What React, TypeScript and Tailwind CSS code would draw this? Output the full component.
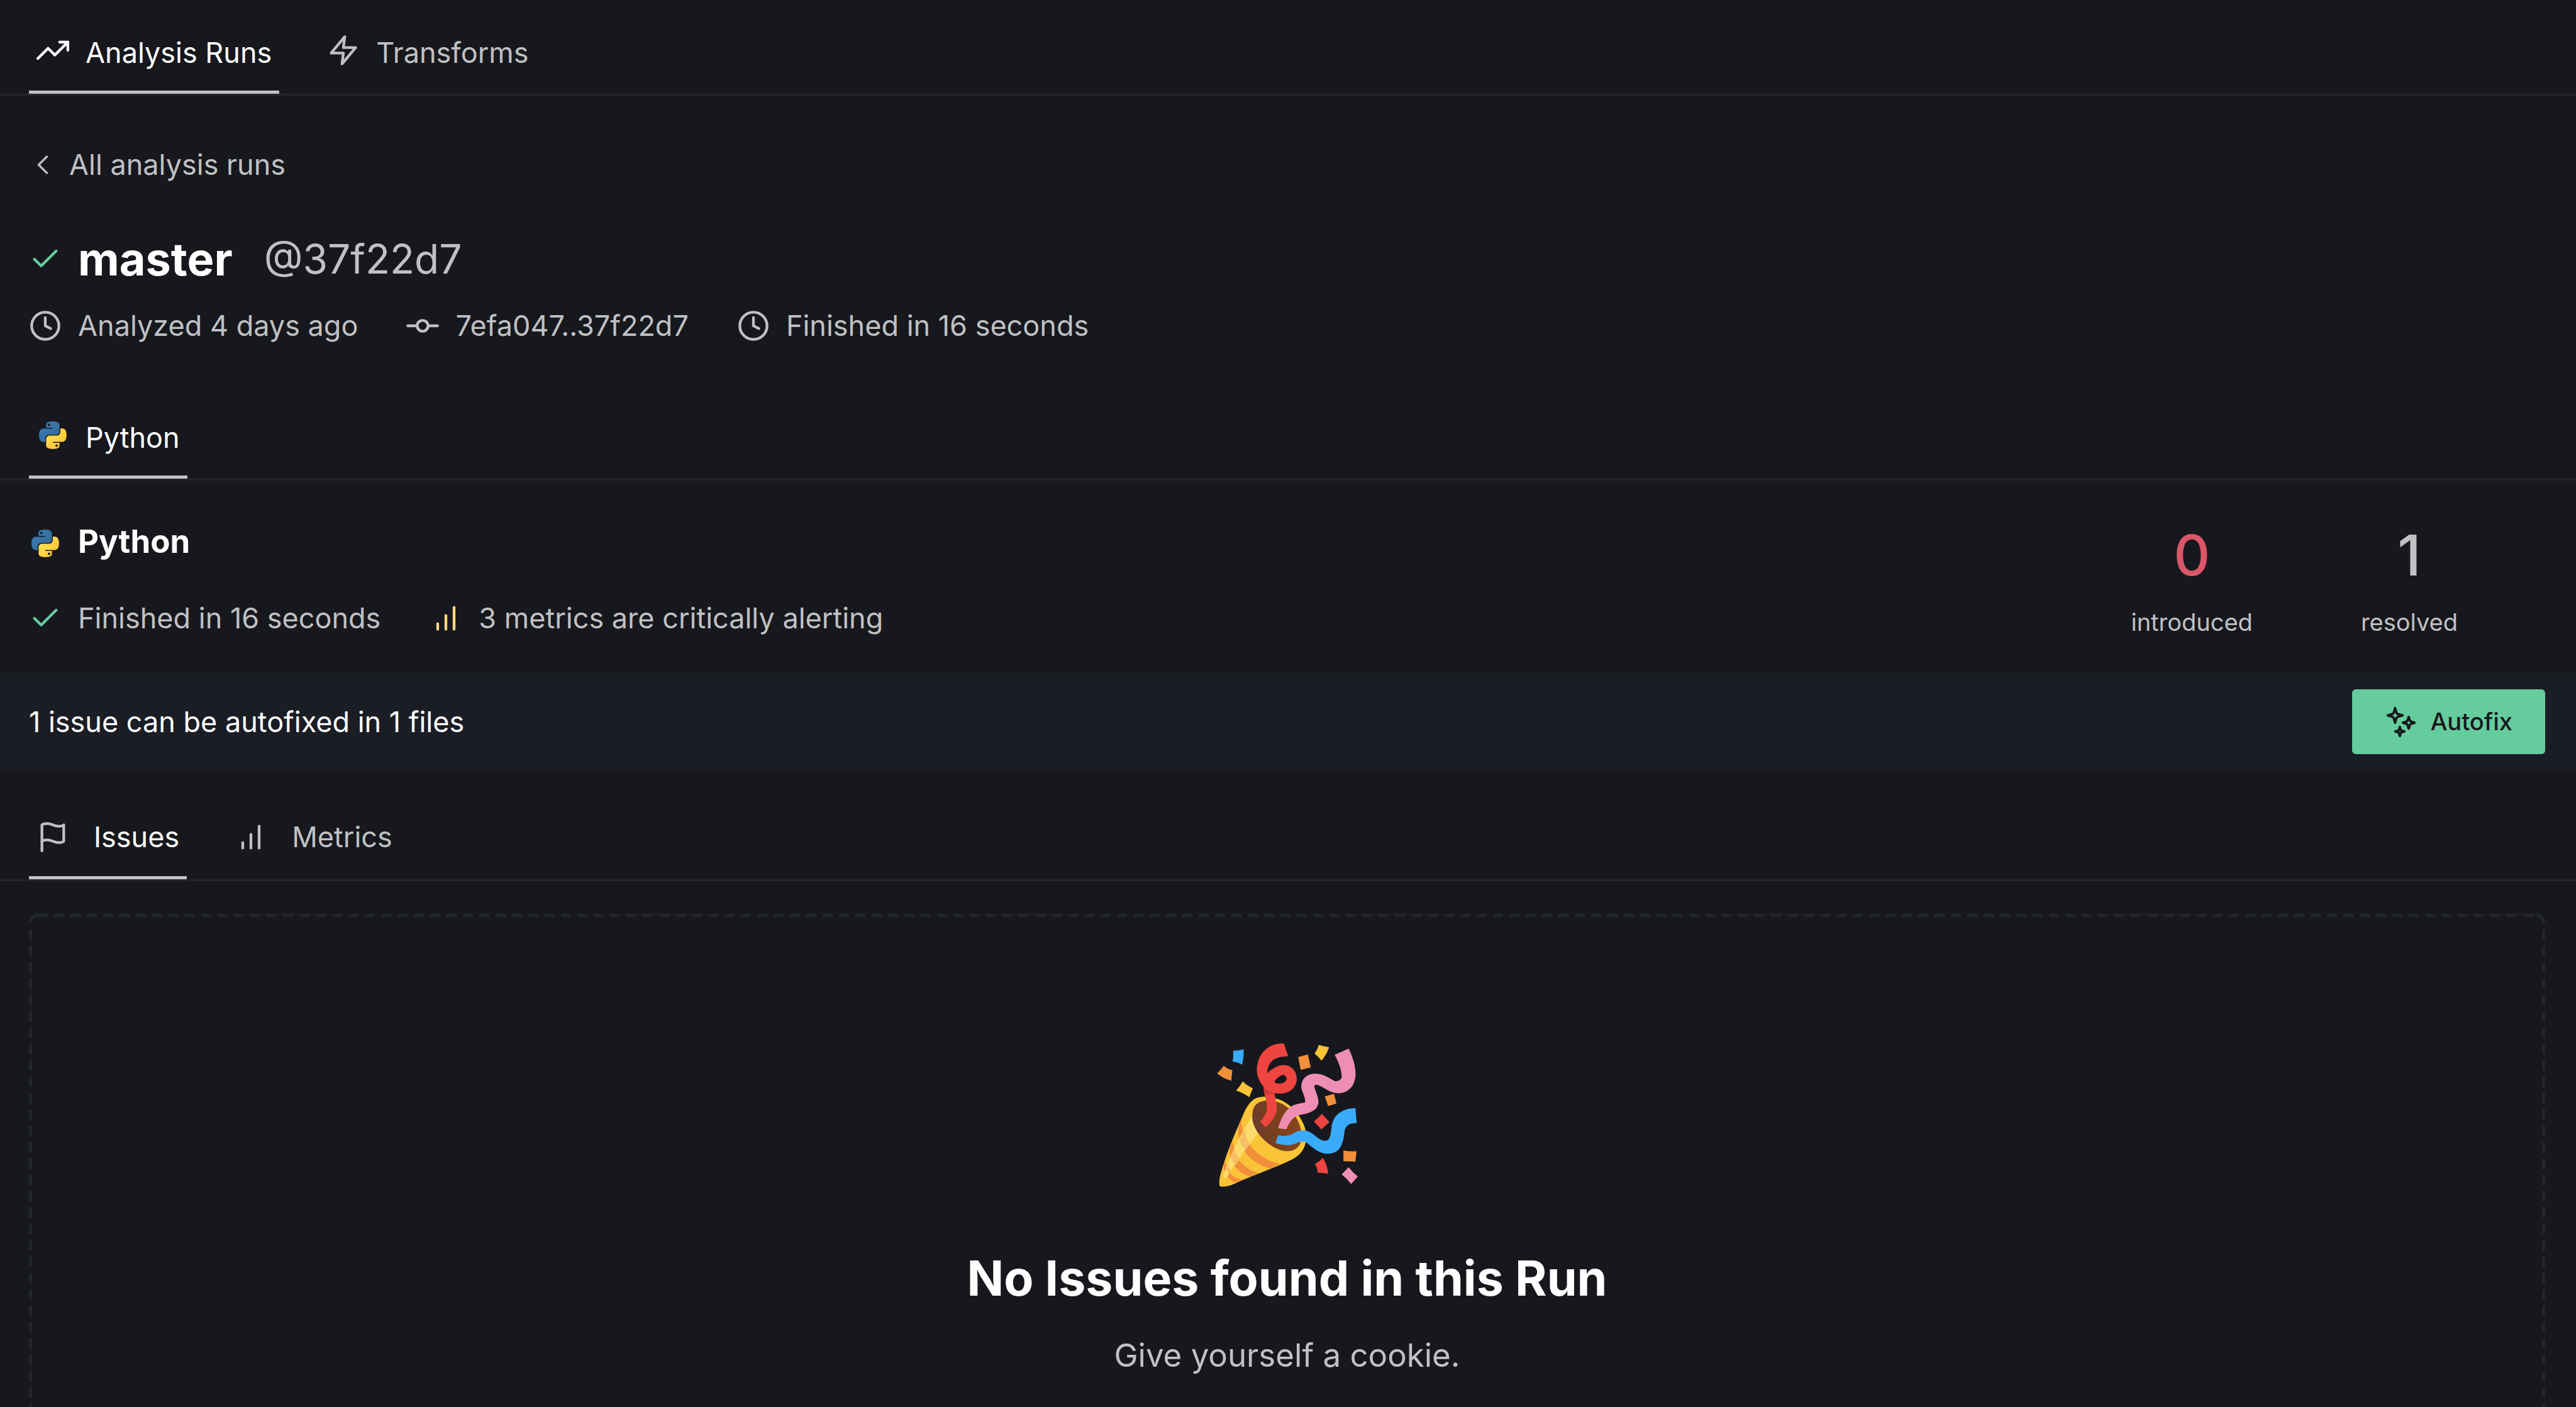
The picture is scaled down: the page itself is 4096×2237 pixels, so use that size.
import type { ReactNode } from "react";
import {
  FiBarChart,
  FiCheck,
  FiChevronLeft,
  FiClock,
  FiFlag,
  FiGitCommit,
  FiTrendingUp,
  FiZap,
} from "react-icons/fi";

function PythonLogo({ id, className }: { id: string; className?: string }) {
  return (
    <svg viewBox="0 0 256 255" className={`mx-1 h-[44px] w-[44px] shrink-0 ${className ?? ""}`} aria-hidden="true">
      <defs>
        <linearGradient id={`${id}-blue`} x1="12.96%" y1="12.04%" x2="79.64%" y2="78.2%">
          <stop offset="0%" stopColor="#387EB8" />
          <stop offset="100%" stopColor="#366994" />
        </linearGradient>
        <linearGradient id={`${id}-yellow`} x1="19.13%" y1="20.58%" x2="90.74%" y2="88.43%">
          <stop offset="0%" stopColor="#FFE052" />
          <stop offset="100%" stopColor="#FFC331" />
        </linearGradient>
      </defs>
      <path
        fill={`url(#${id}-blue)`}
        d="M126.916.072c-64.832 0-60.784 28.115-60.784 28.115l.072 29.128h61.868v8.745H41.631S.145 61.355.145 126.77c0 65.417 36.21 63.097 36.21 63.097h21.61v-30.356s-1.165-36.21 35.632-36.21h61.362s34.475.557 34.475-33.319V33.97S194.67.072 126.916.072zM92.802 19.66a11.12 11.12 0 0 1 11.13 11.13 11.12 11.12 0 0 1-11.13 11.13 11.12 11.12 0 0 1-11.13-11.13 11.12 11.12 0 0 1 11.13-11.13z"
      />
      <path
        fill={`url(#${id}-yellow)`}
        d="M128.757 254.126c64.832 0 60.784-28.115 60.784-28.115l-.072-29.127H127.6v-8.745h86.441s41.486 4.705 41.486-60.712c0-65.416-36.21-63.096-36.21-63.096h-21.61v30.355s1.165 36.21-35.632 36.21h-61.362s-34.475-.557-34.475 33.32v56.013s-5.235 33.897 62.518 33.897zm34.114-19.586a11.12 11.12 0 0 1-11.13-11.13 11.12 11.12 0 0 1 11.13-11.131 11.12 11.12 0 0 1 11.13 11.13 11.12 11.12 0 0 1-11.13 11.13z"
      />
    </svg>
  );
}

function SparklesIcon() {
  return (
    <svg
      viewBox="0 0 24 24"
      className="h-[52px] w-[52px] shrink-0"
      fill="none"
      stroke="currentColor"
      strokeWidth="1.8"
      strokeLinecap="round"
      strokeLinejoin="round"
      aria-hidden="true"
    >
      <path d="M7.55 1.7l.9 3.2q.3 1 1.3 1.3l3.2.9l-3.2.9q-1 .3-1.3 1.3l-.9 3.2l-.9-3.2q-.3-1-1.3-1.3l-3.2-.9l3.2-.9q1-.3 1.3-1.3z" />
      <path d="M17.55 8.2l.75 2.4q.25.9 1.15 1.15l2.4.75l-2.4.75q-.9.25-1.15 1.15l-.75 2.4l-.75-2.4q-.25-.9-1.15-1.15l-2.4-.75l2.4-.75q.9-.25 1.15-1.15z" />
      <path d="M11.05 15.6l.55 1.9q.2.65.85.85l1.9.55l-1.9.55q-.65.2-.85.85l-.55 1.9l-.55-1.9q-.2-.65-.85-.85l-1.9-.55l1.9-.55q.65-.2.85-.85z" />
    </svg>
  );
}

function PartyPopper() {
  return (
    <svg viewBox="125 200 1060 1080" className="h-[232px] w-[228px]" role="img" aria-label="Party popper">
      <defs>
        <linearGradient id="cone-inside" x1="400" y1="820" x2="760" y2="760" gradientUnits="userSpaceOnUse">
          <stop offset="0" stopColor="#6D3B2E" />
          <stop offset="0.5" stopColor="#7B401B" />
          <stop offset="1" stopColor="#88461D" />
        </linearGradient>
        <clipPath id="cone-body">
          <path d="M153 1262C146 1240 152 1205 165 1160C205 1020 265 880 320 755C350 680 385 625 435 610C520 585 640 625 710 705C775 780 810 870 790 945C778 995 750 1035 700 1062C600 1115 450 1165 320 1222C270 1245 215 1275 165 1269Q156 1268 153 1262Z" />
        </clipPath>
      </defs>
      <g clipPath="url(#cone-body)">
        <rect x="130" y="580" width="700" height="720" fill="#FBC337" />
        <path d="M322 750C290 850 390 1060 600 1100L530 1135C360 1090 280 960 292 830Z" fill="#F28F3A" />
        <path d="M252 930C250 1040 330 1140 440 1168L380 1195C270 1160 215 1070 230 985Z" fill="#F28F3A" />
        <path d="M196 1075C200 1150 250 1210 325 1218L275 1242C220 1220 180 1170 183 1110Z" fill="#F28F3A" />
        <path d="M393 750L435 875C350 990 260 1110 207 1200Q190 1215 178 1195C215 1080 300 890 393 750Z" fill="#FDDC6B" />
        <path d="M300 925Q318 965 345 1000L378 955Q350 920 338 848Q318 885 300 925ZM236 1055Q250 1085 276 1108L302 1062Q278 1035 262 992Q248 1025 236 1055ZM200 1140L222 1172L236 1150Q222 1125 214 1100Z" fill="#F7BE64" />
      </g>
      <path d="M430 655C485 615 590 625 665 690C740 755 780 880 750 950C715 1025 620 1020 535 965C460 915 395 830 395 750Q396 680 430 655Z" fill="url(#cone-inside)" />
      <path d="M478 510L558 545C558 600 578 640 577 690C574 740 540 790 493 829L453 789C480 760 505 725 505 675C503 625 478 590 478 510Z" fill="#EE4540" />
      <path d="M478 510L558 575L555 585Q510 590 484 580Q478 550 478 510Z" fill="#CB3C34" />
      <path
        fillRule="evenodd"
        fill="#EE4540"
        d="M629 209L661 305C590 305 515 318 505 430C540 395 585 370 627 369C685 370 725 415 725 473C722 540 665 581 595 581C500 575 430 500 429 400C432 300 500 205 629 209ZM559 492C575 467 600 447 625 441C640 445 650 460 649 475C645 500 610 508 590 506Q565 504 559 492Z"
      />
      <path
        d="M587 836C605 770 635 705 690 672C720 655 755 655 787 645C790 600 755 560 758 520C765 460 810 433 865 433C925 435 960 465 1005 487C1030 492 1052 480 1057 460C1058 400 1030 340 1005 293L1108 248C1135 300 1160 370 1160 440C1155 520 1115 575 1030 578C960 575 930 530 870 514Q855 515 854 526C862 565 885 600 885 645C880 715 800 730 740 740C690 755 665 800 648 843Q615 843 587 836Z"
        fill="#EE8EB3"
      />
      <path
        d="M588 888C640 900 675 892 705 872C740 850 790 845 830 870C870 895 895 930 938 930C975 925 975 880 982 830C990 740 1060 690 1159 688L1168 800C1120 795 1085 815 1078 860C1068 950 1050 1025 950 1026C880 1020 840 975 795 942C750 920 720 958 665 962Q610 962 567 946Z"
        fill="#3AABF8"
      />
      <path d="M254 264Q292 262 331 254Q335 305 320 366Q290 348 250 344Q258 305 254 264Z" fill="#3AABF8" />
      <path d="M184 374Q210 398 248 407Q243 445 240 485Q180 470 135 430Q162 405 184 374Z" fill="#F28F3A" />
      <path d="M325 490Q355 522 400 541Q385 570 374 607Q330 575 276 558Q305 525 325 490Z" fill="#FBC337" />
      <path d="M735 309L807 291L828 386L754 405Z" fill="#F28F3A" />
      <path d="M888 220Q922 232 963 237Q950 285 908 336Q885 310 857 284Q878 255 888 220Z" fill="#FBC337" />
      <path d="M932 602L1000 582L1018 654L957 673Z" fill="#F28F3A" />
      <path d="M912 731L966 791L907 846L852 787Z" fill="#EE4540" />
      <path d="M918 1055Q952 1110 957 1174Q918 1167 880 1166Q878 1133 859 1102Q893 1082 918 1055Z" fill="#EE4540" />
      <path d="M1070 1002Q1118 1010 1167 1007L1158 1084Q1112 1080 1070 1081Z" fill="#F28F3A" />
      <path d="M1108 1125Q1138 1163 1177 1194L1127 1250Q1098 1210 1057 1179Z" fill="#EE8EB3" />
    </svg>
  );
}

const icon = "h-[52px] w-[52px] shrink-0";

function Tab({ active, className, children }: { active?: boolean; className: string; children: ReactNode }) {
  return (
    <button
      type="button"
      role="tab"
      aria-selected={active ? "true" : "false"}
      className={`flex items-center border-b-[5px] px-3 ${
        active ? "border-[#c0c1c3] text-white" : "border-transparent text-[#c0c1c3]"
      } ${className}`}
    >
      {children}
    </button>
  );
}

function TabBar({ label, className, children }: { label: string; className?: string; children: ReactNode }) {
  return (
    <div
      role="tablist"
      aria-label={label}
      className={`flex gap-16 border-b-[3px] border-[#23252f] px-[46px] ${className ?? ""}`}
    >
      {children}
    </div>
  );
}

function Meta({ glyph, children }: { glyph: ReactNode; children: ReactNode }) {
  return (
    <li className="flex items-center gap-[26px]">
      {glyph}
      <span>{children}</span>
    </li>
  );
}

function Stat({ value, label, color }: { value: number; label: string; color: string }) {
  return (
    <div className="flex flex-col-reverse items-center gap-[35px]">
      <dt className="text-[38px] leading-[52px]">{label}</dt>
      <dd className={`text-[90px] leading-[90px] font-medium ${color}`}>{value}</dd>
    </div>
  );
}

export default function App() {
  return (
    <main className="flex h-screen flex-col overflow-hidden bg-[#17181d] font-['Inter',sans-serif] text-[45px] leading-[65px] text-[#c0c1c3]">
      <TabBar label="Repository views">
        <Tab active className="gap-[26px] pt-[51px] pb-7">
          <FiTrendingUp className={`${icon} mb-2`} />
          Analysis Runs
        </Tab>
        <Tab className="gap-[26px] pt-[51px] pb-7">
          <FiZap className={`${icon} mb-2`} />
          Transforms
        </Tab>
      </TabBar>

      <header className="px-[46px] pt-[77px]">
        <a href="#runs" className="-ml-1 inline-flex items-center gap-4 align-top">
          <FiChevronLeft className={icon} strokeWidth={1.5} />
          All analysis runs
        </a>
        <div className="mt-[73px] flex items-center gap-[26px]">
          <FiCheck className={`${icon} text-[#65cc9d]`} />
          <h1 className="text-[72px] leading-[90px] font-bold text-white">master</h1>
          <span className="ml-6 text-[64px] leading-[90px]">@37f22d7</span>
        </div>
        <ul className="mt-7 flex gap-[77px]">
          <Meta glyph={<FiClock className={icon} />}>Analyzed 4 days ago</Meta>
          <Meta glyph={<FiGitCommit className={icon} />}>7efa047..37f22d7</Meta>
          <Meta glyph={<FiClock className={icon} />}>Finished in 16 seconds</Meta>
        </ul>
      </header>

      <TabBar label="Analyzers" className="mt-[62px]">
        <Tab active className="gap-[26px] pt-[51px] pb-7">
          <PythonLogo id="tab-logo" className="mb-2" />
          Python
        </Tab>
      </TabBar>

      <section className="flex items-end justify-between pt-[58px] pr-[188px] pb-[55px] pl-[46px]">
        <div>
          <h2 className="flex items-center gap-[26px] text-[51px] leading-[78px] font-bold text-white">
            <PythonLogo id="heading-logo" className="mt-1.5" />
            Python
          </h2>
          <ul className="mt-[50px] flex gap-[78px]">
            <Meta glyph={<FiCheck className={`${icon} text-[#65cc9d]`} />}>Finished in 16 seconds</Meta>
            <Meta glyph={<FiBarChart className={`${icon} text-[#f9d97f]`} />}>3 metrics are critically alerting</Meta>
          </ul>
        </div>
        <dl className="flex gap-[172px]">
          <Stat value={0} label="introduced" color="text-[#da5668]" />
          <Stat value={1} label="resolved" color="text-[#c0c1c3]" />
        </dl>
      </section>

      <section className="flex items-center justify-between bg-[#1b1d25] px-[46px] py-[26px]">
        <p className="text-white">1 issue can be autofixed in 1 files</p>
        <button
          type="button"
          className="mr-[3px] flex items-center gap-5 rounded-[6px] bg-[#65cc9d] px-[52px] py-[19px] text-[38px] leading-[65px] font-medium text-[#16181d]"
        >
          <SparklesIcon />
          Autofix
        </button>
      </section>

      <TabBar label="Results">
        <Tab active className="gap-[39px] pt-[73px] pb-[30px]">
          <FiFlag className={`${icon} text-[#c0c1c3]`} />
          Issues
        </Tab>
        <Tab className="gap-[39px] pt-[73px] pb-[30px]">
          <FiBarChart className={icon} />
          Metrics
        </Tab>
      </TabBar>

      <section className="mt-[52px] mr-[49px] ml-[46px] flex flex-1 flex-col items-center bg-[image:radial-gradient(circle_at_100%_100%,transparent_9px,#23252f_9px_14px,transparent_14px),radial-gradient(circle_at_0_100%,transparent_9px,#23252f_9px_14px,transparent_14px),repeating-linear-gradient(90deg,#23252f_0_16px,transparent_16px_26px),repeating-linear-gradient(180deg,#23252f_0_16px,transparent_16px_26px),repeating-linear-gradient(180deg,#23252f_0_16px,transparent_16px_26px)] bg-[length:14px_14px,14px_14px,calc(100%-28px)_5px,5px_calc(100%-25px),5px_calc(100%-25px)] bg-[position:0_0,100%_0,14px_0,0_25px,100%_25px] bg-no-repeat pt-[204px]">
        <PartyPopper />
        <h2 className="mt-[91px] text-[77px] leading-[104px] font-bold text-white">No Issues found in this Run</h2>
        <p className="mt-8 text-[51px] leading-[78px]">Give yourself a cookie.</p>
      </section>
    </main>
  );
}
